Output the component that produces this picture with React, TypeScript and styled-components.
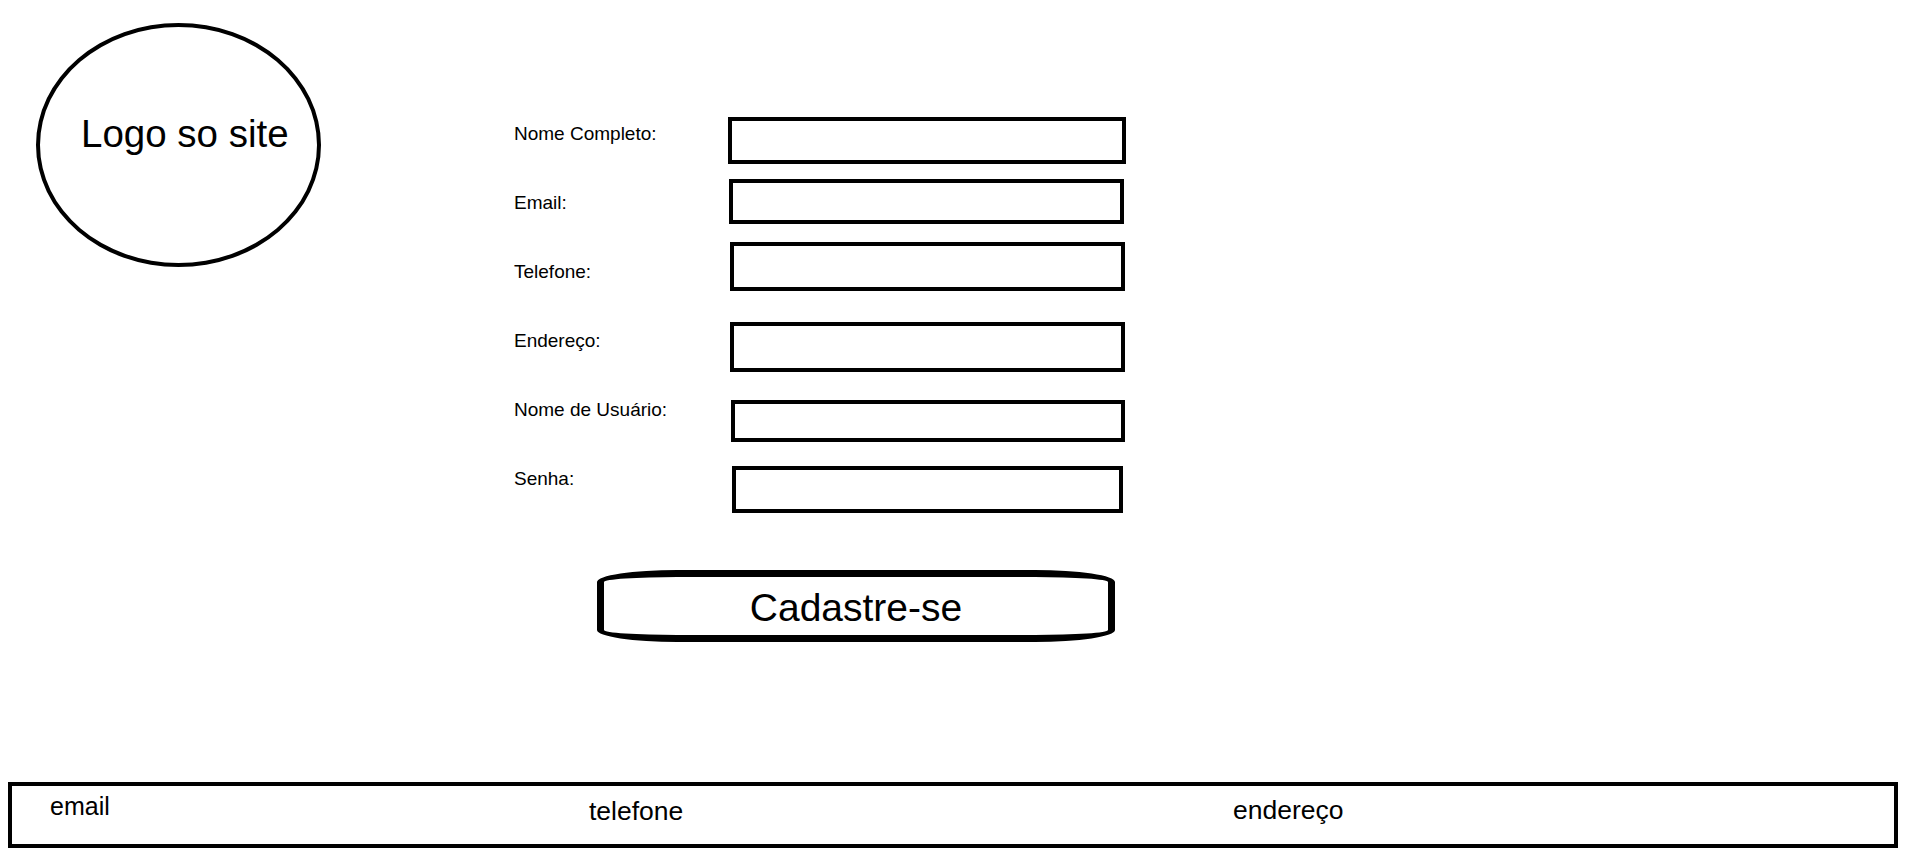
import React from "react";
import styled, { createGlobalStyle } from "styled-components";

const GlobalStyle = createGlobalStyle`
  html, body {
    margin: 0;
    padding: 0;
    background: #ffffff;
    color: #000000;
    font-family: "Liberation Sans", Arial, sans-serif;
  }
  * { box-sizing: border-box; }
`;

const Page = styled.div`
  display: flex;
  flex-direction: column;
  min-height: 860px;
  padding-bottom: 12px;
  background: #ffffff;
`;

const Top = styled.div`
  display: flex;
  align-items: flex-start;
  padding: 23px 0 0 36px;
`;

const Logo = styled.div`
  flex-shrink: 0;
  width: 285px;
  height: 244px;
  border: 4px solid #000;
  border-radius: 50%;
  padding: 88px 0 0 41px;
`;

const LogoText = styled.span`
  display: block;
  font-size: 38.5px;
  line-height: 1;
  white-space: nowrap;
`;

const Form = styled.form`
  display: flex;
  flex-direction: column;
  margin: 94px 0 0 193px;
`;

const Row = styled.div`
  display: flex;
  align-items: flex-start;
  height: 69px;
`;

const Label = styled.label`
  flex-shrink: 0;
  width: 214px;
  margin-top: 7px;
  font-size: 19px;
  line-height: 1;
  white-space: nowrap;
`;

const Box = styled.input<{ $dx: number; $dy: number; $w: number; $h: number }>`
  flex-shrink: 0;
  display: block;
  margin: ${(p) => p.$dy}px 0 0 ${(p) => p.$dx}px;
  width: ${(p) => p.$w}px;
  height: ${(p) => p.$h}px;
  border: 4px solid #000;
  border-radius: 0;
  background: #fff;
  padding: 0 8px;
  font-family: "Liberation Sans", Arial, sans-serif;
  font-size: 18px;
  outline: none;
`;

const SubmitButton = styled.button`
  align-self: flex-start;
  display: flex;
  align-items: center;
  justify-content: center;
  margin: 39px 0 0 83px;
  width: 518px;
  height: 72px;
  padding: 4px 0 0 0;
  border: 7px solid #000;
  border-radius: 80px / 12px;
  background: #fff;
  color: #000;
  font-family: "Liberation Sans", Arial, sans-serif;
  font-size: 39px;
  cursor: pointer;
`;

const Footer = styled.footer`
  display: grid;
  grid-template-columns: 539px 644px 1fr;
  align-items: start;
  margin: auto 9px 0 8px;
  height: 66px;
  border: 4px solid #000;
  padding-left: 38px;
`;

const FooterItem = styled.span<{ $dy: number; $size: number }>`
  margin-top: ${(p) => p.$dy}px;
  font-size: ${(p) => p.$size}px;
  line-height: 1;
  white-space: nowrap;
`;

const fields = [
  { id: "nome", label: "Nome Completo:", dx: 0, dy: 0, w: 398, h: 47, type: "text" },
  { id: "email", label: "Email:", dx: 1, dy: -7, w: 395, h: 45, type: "email" },
  { id: "telefone", label: "Telefone:", dx: 2, dy: -13, w: 395, h: 49, type: "tel" },
  { id: "endereco", label: "Endereço:", dx: 2, dy: -2, w: 395, h: 50, type: "text" },
  { id: "usuario", label: "Nome de Usuário:", dx: 3, dy: 7, w: 394, h: 42, type: "text" },
  { id: "senha", label: "Senha:", dx: 4, dy: 4, w: 391, h: 47, type: "password" },
];

export default function App() {
  return (
    <>
      <GlobalStyle />
      <Page>
        <Top>
          <Logo>
            <LogoText>Logo so site</LogoText>
          </Logo>
          <Form onSubmit={(e) => e.preventDefault()}>
            {fields.map((f) => (
              <Row key={f.id}>
                <Label htmlFor={f.id}>{f.label}</Label>
                <Box id={f.id} type={f.type} $dx={f.dx} $dy={f.dy} $w={f.w} $h={f.h} />
              </Row>
            ))}
            <SubmitButton type="submit">Cadastre-se</SubmitButton>
          </Form>
        </Top>
        <Footer>
          <FooterItem $dy={8} $size={25}>email</FooterItem>
          <FooterItem $dy={12} $size={26.5}>telefone</FooterItem>
          <FooterItem $dy={11} $size={26.5}>endereço</FooterItem>
        </Footer>
      </Page>
    </>
  );
}
